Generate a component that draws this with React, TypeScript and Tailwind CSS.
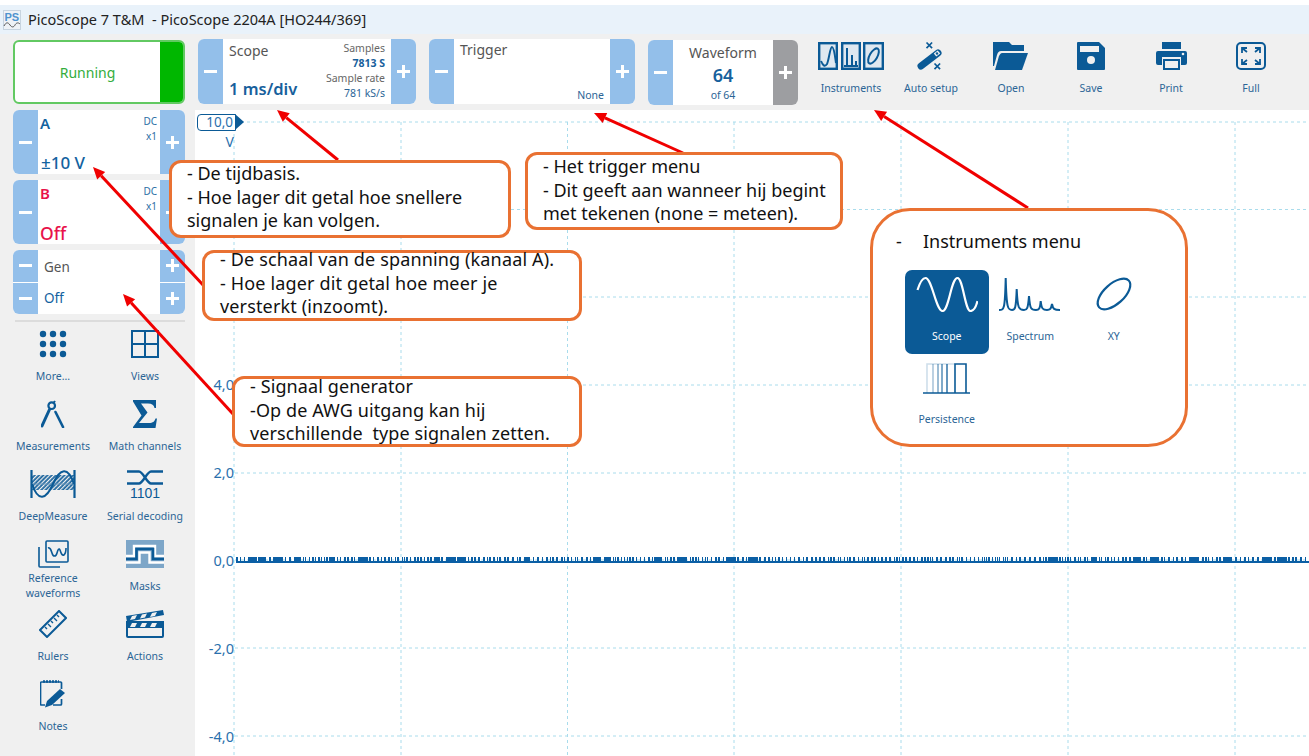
import React from "react";

const BLUE = "#0b5a96";

function Minus() {
  return (
    <svg width="13" height="13" viewBox="0 0 13 13" className="block"><rect x="0" y="5" width="13" height="3" fill="#fff" /></svg>
  );
}

function Plus() {
  return (
    <svg width="13" height="13" viewBox="0 0 13 13" className="block"><path d="M0 5h5V0h3v5h5v3H8v5H5V8H0Z" fill="#fff" /></svg>
  );
}

function Stepper({ left = "bg-[#93bfea]", right = "bg-[#93bfea]", children, className = "" }: { left?: string; right?: string; children: React.ReactNode; className?: string }) {
  return (
    <div className={`flex rounded-[6px] bg-white ${className}`}>
      <div className={`w-[25px] shrink-0 rounded-l-[6px] flex items-center justify-center ${left}`}><Minus /></div>
      <div className="flex-1 min-w-0">{children}</div>
      <div className={`w-[25px] shrink-0 rounded-r-[6px] flex items-center justify-center ${right}`}><Plus /></div>
    </div>
  );
}

function ChannelBox({ name, range, red }: { name: string; range: string; red?: boolean }) {
  const color = red ? "text-[#e8124a]" : "text-[#13629f]";
  return (
    <Stepper className="h-[64px]">
      <div className="h-full pl-[2px] pr-[3px] pt-[4px] pb-px flex flex-col">
        <div className="flex justify-between">
          <span className={`text-[15px] font-semibold leading-[18px] ${color}`}>{name}</span>
          <span className="text-[10px] leading-[15px] text-right text-[#2d6ea5]">DC<br />x1</span>
        </div>
        <div className={`mt-auto leading-[20px] font-medium ${red ? "text-[17.5px]" : "text-[17px] pl-px"} ${color}`}>{range}</div>
      </div>
    </Stepper>
  );
}

function GenBox() {
  return (
    <div className="h-[64px] rounded-[6px] bg-white flex">
      <div className="w-[25px] flex flex-col gap-px">
        <div className="flex-1 rounded-tl-[6px] bg-[#93bfea] flex items-center justify-center"><Minus /></div>
        <div className="flex-1 rounded-bl-[6px] bg-[#93bfea] flex items-center justify-center"><Minus /></div>
      </div>
      <div className="flex-1 flex flex-col pl-[6px] text-[13.5px]">
        <div className="flex-1 flex items-center pt-[2px] text-[#555]">Gen</div>
        <div className="flex-1 flex items-center text-[#13629f]">Off</div>
      </div>
      <div className="w-[25px] flex flex-col gap-px">
        <div className="flex-1 rounded-tr-[6px] bg-[#93bfea] flex items-center justify-center"><Plus /></div>
        <div className="flex-1 rounded-br-[6px] bg-[#93bfea] flex items-center justify-center"><Plus /></div>
      </div>
    </div>
  );
}

function Tool({ icon, label }: { icon: React.ReactNode; label: React.ReactNode }) {
  return (
    <div className="h-[70px] flex flex-col items-center pt-[4px] pb-[2px]">
      <div className="h-[28px] flex items-center justify-center">{icon}</div>
      <div className="flex-1 flex items-center text-center text-[10.5px] leading-[15px] text-[#2b6596]">{label}</div>
    </div>
  );
}

function TopTool({ icon, label }: { icon: React.ReactNode; label: string }) {
  return (
    <div className="w-[80px] flex flex-col items-center">
      <div className="h-[28px] mt-[3px] flex items-center justify-center">{icon}</div>
      <div className="mt-[11px] text-[10.5px] leading-[15px] text-[#2b6596]">{label}</div>
    </div>
  );
}

const icons = {
  instruments: (
    <svg width="66" height="28" viewBox="0 0 66 28" fill="none" stroke={BLUE}>
      <rect x="1.200" y="1.200" width="17.600" height="25.600" strokeWidth="2.4" fill="#dfe8f0" />
      <path d="M3 19C5 24 7 25 9 22C11 18 12 5 14 5C16 5 17 14 18 21" strokeWidth="2" />
      <rect x="24.200" y="1.200" width="17.600" height="25.600" strokeWidth="2.4" fill="#dfe8f0" />
      <path d="M26 24h14M29 24V6M34 24V13M38 24V19" strokeWidth="2" />
      <rect x="46.200" y="1.200" width="18.600" height="25.600" strokeWidth="2.400" fill="#dfe8f0" />
      <ellipse cx="55.500" cy="14" rx="3.800" ry="8.500" transform="rotate(30 55.5 14)" strokeWidth="2" />
    </svg>
  ),
  auto: (
    <svg width="28" height="30" viewBox="0 0 28 30" fill="none" stroke={BLUE}>
      <line x1="4" y1="25" x2="21" y2="12" strokeWidth="7" strokeLinecap="round" />
      <rect x="17.500" y="10.500" width="5" height="4" transform="rotate(-38 20 12.5)" fill="#f0f0f0" stroke="none" />
      <circle cx="20" cy="12.500" r="1.200" fill={BLUE} stroke="none" />
      <path d="M9.500 1.500l5.600 5.600M15.100 1.500 9.500 7.100M17.500 22.500l5.600 5.600M23.100 22.500l-5.600 5.600" strokeWidth="1.700" />
    </svg>
  ),
  open: (
    <svg width="36" height="28" viewBox="0 0 36 28" fill={BLUE}>
      <path d="M0 0H16L19 3H31V9H8C6 9 5 10 4 13L1 24H0Z" />
      <path d="M9 11H35L29 28H2L6 14C7 12 8 11 9 11Z" />
    </svg>
  ),
  save: (
    <svg width="28" height="28" viewBox="0 0 28 28">
      <path d="M1 0H22L28 6V27a1 1 0 0 1-1 1H1a1 1 0 0 1-1-1V1a1 1 0 0 1 1-1Z" fill={BLUE} />
      <rect x="3" y="4" width="19" height="6" fill="#f0f0f0" />
      <circle cx="14" cy="18" r="4" fill="#f0f0f0" />
    </svg>
  ),
  print: (
    <svg width="31" height="28" viewBox="0 0 31 28" fill={BLUE}>
      <rect x="6" y="0" width="19" height="7" />
      <path d="M2 9H29a2 2 0 0 1 2 2V21a2 2 0 0 1-2 2H25V15H6V23H2a2 2 0 0 1-2-2V11a2 2 0 0 1 2-2Z" />
      <path d="M7 17H24V28H7Zm2 2v7H22V19Z" />
      <circle cx="27" cy="12" r="1.300" fill="#f0f0f0" />
    </svg>
  ),
  full: (
    <svg width="30" height="28" viewBox="0 0 30 28" fill="none" stroke={BLUE}>
      <rect x="1" y="1" width="28" height="26" rx="4" strokeWidth="2" />
      <path d="M6 11V6h5M6 6l5 4M24 11V6h-5M24 6l-5 4M6 17v5h5M6 22l5-4M24 17v5h-5M24 22l-5-4" strokeWidth="1.800" />
    </svg>
  ),
  more: (
    <svg width="28" height="28" viewBox="0 0 28 28" fill={BLUE}>
      {[4, 14, 24].flatMap((y) => [4, 14, 24].map((x) => <circle key={`${x}-${y}`} cx={x} cy={y} r="3.200" />))}
    </svg>
  ),
  views: (
    <svg width="28" height="28" viewBox="0 0 28 28" fill="none" stroke={BLUE} strokeWidth="2">
      <rect x="1" y="1" width="26" height="26" />
      <path d="M14 1V27M1 14H27" />
    </svg>
  ),
  measure: (
    <svg width="24" height="28" viewBox="0 0 24 28" fill="none" stroke={BLUE}>
      <circle cx="10.700" cy="5.700" r="3.300" strokeWidth="2.200" />
      <path d="M14 1 12.500 3" strokeWidth="2" />
      <path d="M8.500 9.500 1 26" strokeWidth="3" strokeLinecap="round" />
      <path d="M14.500 12 22 27" strokeWidth="2.600" strokeLinecap="round" />
    </svg>
  ),
  sigma: (
    <svg width="24" height="28" viewBox="0 0 24 28" fill={BLUE}>
      <path d="M0 0H23V8H21.500C21 5 19 3.500 15 3.500H8L14.500 12.500 6 23H16C20 23 21.500 21.500 22.500 18.500H24L22.500 28H0V27L8.500 15.500 0 1.500Z" />
    </svg>
  ),
  deep: (
    <svg width="46" height="28" viewBox="0 0 46 28" fill="none" stroke={BLUE}>
      <defs>
        <pattern id="hatch" width="3" height="3" patternUnits="userSpaceOnUse" patternTransform="rotate(45)">
          <rect width="1.400" height="3" fill="#b9ccdc" />
        </pattern>
      </defs>
      <rect x="2" y="5" width="42" height="15" fill="url(#hatch)" stroke="none" />
      <path d="M1.500 0V28M44.500 0V28" strokeWidth="2.200" />
      <path d="M2 14H44" strokeWidth="1" stroke="#6d97ba" />
      <path d="M2 14C8 32 16 30 23 14S38 -4 44 14" strokeWidth="2" />
    </svg>
  ),
  serial: (
    <svg width="36" height="28" viewBox="0 0 36 28" fill="none" stroke={BLUE} className="overflow-visible">
      <path d="M0 1.500H12C16 1.500 20 13.500 24 13.500H36M0 13.500H12C16 13.500 20 1.500 24 1.500H36" strokeWidth="2.400" />
      <text x="18" y="27.500" textAnchor="middle" fontSize="14" fill={BLUE} stroke="none" fontFamily="'Liberation Sans', sans-serif">1101</text>
    </svg>
  ),
  reference: (
    <svg width="31" height="28" viewBox="0 0 31 28" fill="none" stroke={BLUE}>
      <rect x="8" y="1" width="22" height="21" rx="1" strokeWidth="1.600" />
      <path d="M1 7V26a1 1 0 0 0 1 1H22" strokeWidth="1.600" />
      <path d="M10 8C12 7 13 10 14 13C15 17 18 17 19 13C20 9 21 8 22 10C23 13 24 16 26 15C27 14 28 10 28 8" strokeWidth="1.600" />
    </svg>
  ),
  masks: (
    <svg width="38" height="28" viewBox="0 0 38 28" fill="none">
      <rect width="38" height="28" fill="#7da6c8" />
      <path d="M0 16H8V6H29V16H38" stroke="#fff" strokeWidth="2.400" />
      <path d="M0 19H10.500V9H27V19H38" stroke={BLUE} strokeWidth="2.600" />
      <path d="M0 22.500H13.500V12.500H23.500V22.500H38" stroke="#fff" strokeWidth="2.400" />
    </svg>
  ),
  rulers: (
    <svg width="28" height="28" viewBox="0 0 28 28" fill="none" stroke={BLUE}>
      <path d="M1 20 20 1l7 7L8 27Z" strokeWidth="2" />
      <path d="M6 17l2 2M9 14l3 3M12 11l2 2M15 8l3 3M18 5l2 2" strokeWidth="1.400" />
    </svg>
  ),
  actions: (
    <svg width="38" height="28" viewBox="0 0 38 28" fill={BLUE}>
      <path d="M0 6 37 0l1 5L1 12Z" />
      <path d="M0 11H38V26a2 2 0 0 1-2 2H2a2 2 0 0 1-2-2Z" />
      <rect x="2" y="18" width="34" height="8" fill="#f0f0f0" />
      <path d="M6 13h5l-2 4H4ZM16 13h5l-2 4h-5ZM26 13h5l-2 4h-5Z" fill="#f0f0f0" />
      <path d="M6 6l5-1-2 4-5 1ZM16 4.500l5-1-2 4-5 1ZM26 3l5-1-2 4-5 1Z" fill="#f0f0f0" />
    </svg>
  ),
  notes: (
    <svg width="26" height="28" viewBox="0 0 26 28" fill="none" stroke={BLUE}>
      <path d="M21.500 9V3a1 1 0 0 0-1-1H1.500a1 1 0 0 0-1 1V24a1 1 0 0 0 1 1H5M13 25H20.500a1 1 0 0 0 1-1V19" strokeWidth="1.700" />
      <path d="M3 1.500H19" strokeWidth="2.600" strokeDasharray="2 1" />
      <path d="M5 27.500 7 21 20 9l5 4-13 12Z" fill={BLUE} stroke="none" />
    </svg>
  ),
};

function Arrow({ x1, y1, x2, y2 }: { x1: number; y1: number; x2: number; y2: number }) {
  const a = Math.atan2(y2 - y1, x2 - x1);
  const ux = Math.cos(a);
  const uy = Math.sin(a);
  const bx = x2 - ux * 12;
  const by = y2 - uy * 12;
  const pts = `${x2},${y2} ${bx - uy * 5.5},${by + ux * 5.5} ${bx + uy * 5.5},${by - ux * 5.5}`;
  return (
    <>
      <line x1={x1} y1={y1} x2={bx} y2={by} stroke="#f00000" strokeWidth="3" />
      <polygon points={pts} fill="#f00000" />
    </>
  );
}

// barcode-like noise sitting on the zero line
function noiseLine() {
  let d = "";
  let seed = 11;
  let x = 41;
  while (x < 1114) {
    seed = (seed * 75 + 74) % 65537;
    const len = seed % 11 === 0 ? 6 + (seed % 5) : 1 + (seed % 2);
    const gap = 1 + ((seed >> 3) % 3);
    d += `M${x} 447h${len}v4h-${len}Z`;
    x += len + gap;
  }
  return d;
}

function Plot() {
  const xs = [39, 206, 372.5, 539, 706, 873, 1040];
  const ys = [12, 99.5, 187, 275, 363, 450, 538, 626];
  const labels = [
    { t: "4,0", c: "top-[263px]" },
    { t: "2,0", c: "top-[351px]" },
    { t: "0,0", c: "top-[439px]" },
    { t: "-2,0", c: "top-[527px]" },
    { t: "-4,0", c: "top-[615px]" },
  ];
  return (
    <div className="relative flex-1 bg-white overflow-hidden">
      <svg className="block w-full h-full" viewBox="0 0 1114 646" fill="none">
        {xs.map((x) => <line key={x} x1={x} y1="12" x2={x} y2="646" stroke="#a9dcec" strokeDasharray="3 3" />)}
        {ys.map((y) => <line key={y} x1="40" y1={y} x2="1114" y2={y} stroke="#a9dcec" strokeDasharray="3 3" />)}
        <path d={noiseLine()} fill="#0b5fa5" shapeRendering="crispEdges" />
        <rect x="41" y="451" width="1073" height="2" fill="#0b5fa5" shapeRendering="crispEdges" />
      </svg>
      {labels.map((l) => (
        <div key={l.t} className={`absolute left-0 w-[39px] text-right text-[14.5px] leading-[22px] text-[#2a70ad] ${l.c}`}>{l.t}</div>
      ))}
      <div className="absolute left-[2px] top-[4px] w-[39px] h-[17px] border border-[#0b5a96] rounded-l-[4px] bg-white text-right pr-[2px] text-[13.5px] leading-[15px] text-[#2a70ad]">10,0</div>
      <div className="absolute left-[40px] top-[4px] w-0 h-0 border-y-[8.5px] border-y-transparent border-l-[9px] border-l-[#0b5a96]" />
      <div className="absolute left-0 top-[23px] w-[39px] text-right text-[14px] leading-[18px] text-[#2a70ad]">V</div>
    </div>
  );
}

function Callout({ className, children }: { className: string; children: React.ReactNode }) {
  return (
    <div className={`absolute bg-white border-[3px] border-[#e97132] text-[18px] leading-[23.5px] text-[#111] ${className}`}>
      {children}
    </div>
  );
}

function InstrumentsMenu() {
  return (
    <div className="grid grid-cols-[83.5px_83.5px_83.5px] auto-rows-[83.5px] mt-[16.5px] ml-[32px] text-[10.5px] text-[#2b6596]">
      <div className="rounded-[7px] bg-[#0b5a96] text-white flex flex-col items-center pt-[6px]">
        <svg width="62" height="36" viewBox="0 0 62 36" fill="none" stroke="#fff" strokeWidth="2.200">
          <path d="M1.500 14C4 6 7 2 9.500 2C16 2 20 35 26.500 35C33 35 35 2 41.500 2C47 2 49 35 54.500 35C58 35 60 31 61.500 25" />
        </svg>
        <span className="mt-[16.5px] leading-[15px]">Scope</span>
      </div>
      <div className="flex flex-col items-center pt-[6px]">
        <svg width="62" height="36" viewBox="0 0 62 36" fill="none" stroke={BLUE} strokeWidth="2">
          <path d="M0 34C5 34 6 34 6.700 2C7.500 33 9 34 13 34C16 34 17 33 17.700 13C18.500 33 20 34 25 34C28 34 29 33 30 20C31 33 32 34 37 34C40 34 41 33 41.700 25C42.500 33 44 34 48 34C51 34 52 33 53 28C54 33 55 34 61 34" />
        </svg>
        <span className="mt-[16.5px] leading-[15px]">Spectrum</span>
      </div>
      <div className="flex flex-col items-center pt-[6px]">
        <svg width="40" height="36" viewBox="0 0 40 36" fill="none" stroke={BLUE} strokeWidth="2.200">
          <ellipse cx="20" cy="18" rx="10" ry="20" transform="rotate(48 20 18)" />
        </svg>
        <span className="mt-[16.5px] leading-[15px]">XY</span>
      </div>
      <div className="flex flex-col items-center pt-[9.5px]">
        <svg width="48" height="31" viewBox="0 0 48 31" fill="none" strokeWidth="1.600">
          <path d="M0 30H47" stroke={BLUE} />
          <path d="M4 30V1H32" stroke={BLUE} opacity=".2" />
          <path d="M10 30V1" stroke={BLUE} opacity=".35" />
          <path d="M15 30V1" stroke={BLUE} opacity=".5" />
          <path d="M19 30V1" stroke={BLUE} opacity=".65" />
          <path d="M24 30V1" stroke={BLUE} opacity=".8" />
          <path d="M32 30V1H43V30" stroke={BLUE} />
        </svg>
        <span className="mt-[18px] leading-[15px]">Persistence</span>
      </div>
    </div>
  );
}

export default function App() {
  return (
    <div className="relative w-[1309px] h-[756px] overflow-hidden flex flex-col bg-white font-['Noto_Sans',sans-serif]">
      <div className="h-[5px] shrink-0 bg-white" />
      <div className="h-[29px] shrink-0 bg-[#e9f2fa] flex items-center pl-[3px] gap-[7px]">
        <svg width="18" height="20" viewBox="0 0 18 20" fill="none">
          <rect x="0.500" y="0.500" width="17" height="19" fill="#eef2f6" stroke="#c7d4e0" />
          <text x="1.500" y="10.500" fontSize="11" fontWeight="700" fill="#4f93cf" fontFamily="'Liberation Sans', sans-serif">PS</text>
          <path d="M1 16c2-4 4-4 6-1s4 2 5 0 3-3 5-1" stroke="#555" strokeWidth="1" />
        </svg>
        <span className="text-[14.5px] text-[#222] whitespace-pre">PicoScope 7 T&amp;M  - PicoScope 2204A [HO244/369]</span>
      </div>

      <div className="flex flex-1 min-h-0">
        <aside className="w-[195px] shrink-0 bg-[#f0f0f0] pt-[6px] flex flex-col">
          <div className="ml-[13px] w-[172px] flex flex-col gap-[6px]">
            <div className="h-[64px] rounded-[6px] overflow-hidden border-2 border-[#62c962] bg-white flex">
              <div className="flex-1 flex items-center justify-center text-[14px] text-[#33ad3c]">Running</div>
              <div className="w-[23px] bg-[#00b700]" />
            </div>
            <ChannelBox name="A" range="±10 V" />
            <ChannelBox name="B" range="Off" red />
            <GenBox />
          </div>
          <div className="ml-[15px] w-[170px] h-[2px] mt-[6px] bg-[#dcdcdc]" />
          <div className="grid grid-cols-[92px_92px] ml-[7px] mt-[4px]">
            <Tool icon={icons.more} label="More..." />
            <Tool icon={icons.views} label="Views" />
            <Tool icon={icons.measure} label="Measurements" />
            <Tool icon={icons.sigma} label="Math channels" />
            <Tool icon={icons.deep} label="DeepMeasure" />
            <Tool icon={icons.serial} label="Serial decoding" />
            <Tool icon={icons.reference} label={<>Reference<br />waveforms</>} />
            <Tool icon={icons.masks} label="Masks" />
            <Tool icon={icons.rulers} label="Rulers" />
            <Tool icon={icons.actions} label="Actions" />
            <Tool icon={icons.notes} label="Notes" />
          </div>
        </aside>

        <main className="flex-1 min-w-0 flex flex-col">
          <div className="h-[76px] shrink-0 bg-[#f0f0f0] flex items-start pl-[3px] pt-[5px]">
            <Stepper className="w-[218px] h-[65px]">
              <div className="h-full flex justify-between pl-[6px] pr-[6px]">
                <div className="flex flex-col justify-between pt-[2px] pb-[3px]">
                  <span className="text-[14px] leading-[20px] text-[#555]">Scope</span>
                  <span className="text-[16.5px] leading-[24px] font-semibold text-[#17609c] whitespace-nowrap">1 ms/div</span>
                </div>
                <div className="text-right text-[10.5px] leading-[15px] text-[#666] pt-[2px]">
                  <div>Samples</div>
                  <div className="font-bold text-[#17609c]">7813 S</div>
                  <div>Sample rate</div>
                  <div className="text-[#2b6596]">781 kS/s</div>
                </div>
              </div>
            </Stepper>
            <Stepper className="w-[206px] h-[65px] ml-[13px]">
              <div className="h-full flex flex-col justify-between pl-[6px] pr-[6px] pt-px pb-px">
                <span className="text-[14px] leading-[20px] text-[#555]">Trigger</span>
                <span className="text-[10.5px] leading-[15px] text-right text-[#2b6596]">None</span>
              </div>
            </Stepper>
            <Stepper className="w-[150px] h-[65px] ml-[13px] mt-px" right="bg-[#9d9ea1]">
              <div className="h-full flex flex-col items-center pt-[3px]">
                <span className="text-[14px] leading-[20px] text-[#555]">Waveform</span>
                <span className="text-[18px] leading-[24px] font-semibold text-[#17609c]">64</span>
                <span className="text-[10.5px] leading-[15px] mt-px text-[#2b6596]">of 64</span>
              </div>
            </Stepper>
            <div className="flex ml-[13px]">
              <TopTool icon={icons.instruments} label="Instruments" />
              <TopTool icon={icons.auto} label="Auto setup" />
              <TopTool icon={icons.open} label="Open" />
              <TopTool icon={icons.save} label="Save" />
              <TopTool icon={icons.print} label="Print" />
              <TopTool icon={icons.full} label="Full" />
            </div>
          </div>
          <Plot />
        </main>
      </div>

      {/* annotations drawn on top of the screenshot */}
      <svg className="absolute inset-0 pointer-events-none" width="1309" height="756">
        <Arrow x1={338} y1={160} x2={277} y2={110} />
        <Arrow x1={683} y1={153} x2={594} y2={113} />
        <Arrow x1={1028} y1={208} x2={874} y2={110} />
        <Arrow x1={204} y1={286} x2={93} y2={167} />
        <Arrow x1={233} y1={414} x2={123} y2={294} />
      </svg>

      <Callout className="left-[169px] top-[160px] w-[342px] h-[78px] rounded-[12px] pl-[15px]">
        <div className="-mt-px">- De tijdbasis.</div>
        <div>- Hoe lager dit getal hoe snellere</div>
        <div>signalen je kan volgen.</div>
      </Callout>
      <Callout className="left-[525px] top-[152px] w-[318px] h-[78px] rounded-[12px] pl-[15px]">
        <div>- Het trigger menu</div>
        <div>- Dit geeft aan wanneer hij begint</div>
        <div>met tekenen (none = meteen).</div>
      </Callout>
      <Callout className="left-[202px] top-[250px] w-[380px] h-[71px] rounded-[12px] pl-[15px] tracking-[0.15px]">
        <div className="-mt-[5px]">- De schaal van de spanning (kanaal A).</div>
        <div>- Hoe lager dit getal hoe meer je</div>
        <div>versterkt (inzoomt).</div>
      </Callout>
      <Callout className="left-[232px] top-[376px] w-[350px] h-[71px] rounded-[12px] pl-[15px] tracking-[0.1px]">
        <div className="-mt-[4px]">- Signaal generator</div>
        <div>-Op de AWG uitgang kan hij</div>
        <div>verschillende&nbsp; type signalen zetten.</div>
      </Callout>
      <Callout className="left-[870px] top-[208px] w-[318px] h-[239px] rounded-[40px] pt-[19px]">
        <div className="pl-[23px] flex"><span className="w-[27px]">-</span><span>Instruments menu</span></div>
        <InstrumentsMenu />
      </Callout>
    </div>
  );
}
